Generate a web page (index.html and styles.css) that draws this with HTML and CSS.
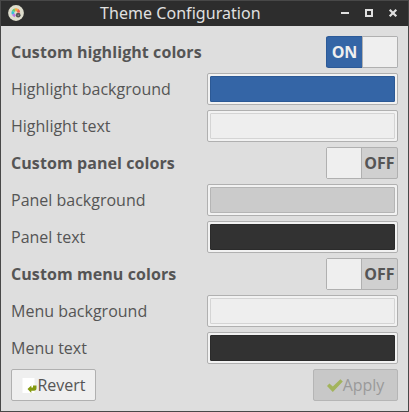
FILE: index.html
```html
<!DOCTYPE html>
<html lang="en">
<head>
<meta charset="utf-8">
<title>Theme Configuration</title>
<link rel="stylesheet" href="styles.css">
</head>
<body>
<div class="window">
  <header class="titlebar">
    <svg class="app-icon" width="16" height="16" viewBox="0 0 16 16">
      <circle cx="8" cy="8" r="7.9" fill="#deddcd"/>
      <g fill="none" stroke-width="2.8">
        <path d="M5.2 9.2A3.2 3.2 0 0 1 5.2 6.4" stroke="#35c0dc"/>
        <path d="M5.2 6.4A3.2 3.2 0 0 1 7 4.9" stroke="#5fce7a"/>
        <path d="M7 4.9A3.2 3.2 0 0 1 9.6 5.2" stroke="#f7aa40"/>
        <path d="M9.6 5.2A3.2 3.2 0 0 1 10.8 7.6" stroke="#f26052"/>
        <path d="M5.2 9.2A3.2 3.2 0 0 0 7.2 10.8" stroke="#b878e6"/>
      </g>
      <circle cx="10.2" cy="10.2" r="2.4" fill="#555"/>
      <circle cx="10.2" cy="10.2" r=".7" fill="#999"/>
    </svg>
    <h1 class="title">Theme Configuration</h1>
    <svg class="controls" width="60" height="10" viewBox="0 0 60 10">
      <path d="M1 5H9" stroke="#e0e0e0" stroke-width="2"/>
      <path d="M26 2H32V8H26Z" fill="none" stroke="#e0e0e0" stroke-width="2"/>
      <path d="M49.7 1.7L56.3 8.3M56.3 1.7L49.7 8.3" stroke="#e0e0e0" stroke-width="2.2"/>
    </svg>
  </header>
  <main class="content">
    <div class="row heading"><span class="label">Custom highlight colors</span><div class="switch on"><span class="state">ON</span><span class="knob"></span></div></div>
    <div class="row"><span>Highlight background</span><div class="color-button"><div class="swatch blue"></div></div></div>
    <div class="row"><span>Highlight text</span><div class="color-button"><div class="swatch light"></div></div></div>
    <div class="row heading"><span class="label">Custom panel colors</span><div class="switch"><span class="knob"></span><span class="state">OFF</span></div></div>
    <div class="row"><span>Panel background</span><div class="color-button"><div class="swatch gray"></div></div></div>
    <div class="row"><span>Panel text</span><div class="color-button"><div class="swatch dark"></div></div></div>
    <div class="row heading"><span class="label">Custom menu colors</span><div class="switch"><span class="knob"></span><span class="state">OFF</span></div></div>
    <div class="row"><span>Menu background</span><div class="color-button"><div class="swatch light"></div></div></div>
    <div class="row"><span>Menu text</span><div class="color-button"><div class="swatch dark"></div></div></div>
    <div class="row">
      <button class="button"><svg width="16" height="16" viewBox="0 0 16 16"><path d="M1.5 1H13.5V16H1.5Z" fill="#fff"/><path d="M6.5 12L10.3 8.5V10.5H12V8.5H15.5V11Q15.5 13.8 13 13.8H10.3V16Z" fill="#859a10"/></svg><span>Revert</span></button>
      <button class="button disabled" disabled><svg width="16" height="16" viewBox="0 0 16 16"><path d="M0 9L2.4 6.6L5.8 9.4L13.4 2.2L15.8 4.6L5.8 15Z" fill="#a3b45c"/></svg><span>Apply</span></button>
    </div>
  </main>
</div>
</body>
</html>
```
FILE: styles.css
```css
* { box-sizing: border-box; }
body { margin: 0; }
.window {
  width: 409px;
  height: 412px;
  border: 1px solid #484848;
  background: #dedede;
  color: #555;
  font: 16px "Open Sans", sans-serif;
  overflow: hidden;
}
.titlebar {
  display: flex;
  align-items: center;
  height: 25px;
  padding: 0 8px 1px 7px;
  background: #2d2d2d;
  color: #e0e0e0;
}
.app-icon { flex: none; }
.title {
  flex: 1;
  margin: 0;
  padding-left: 76px;
  font: 16px/24px "Noto Sans", sans-serif;
  letter-spacing: 0.05px;
  white-space: nowrap;
}
.controls { flex: none; }
.content {
  display: flex;
  flex-direction: column;
  gap: 5px;
  padding: 10px;
}
.row {
  display: flex;
  align-items: center;
  justify-content: space-between;
  height: 32px;
  white-space: nowrap;
}
.heading { font-weight: 700; }
.label { letter-spacing: 0.08px; }
.switch {
  display: flex;
  width: 72px;
  height: 32px;
  border: 1px solid #b0b0b0;
  border-radius: 2px;
  background: #d0d0d0;
}
.state { flex: 1; text-align: center; line-height: 30px; }
.knob { width: 35px; background: #efefef; border-right: 1px solid #b0b0b0; }
.on { background: #3465a6; color: #efefef; border-color: #b0b0b0 #b0b0b0 #b0b0b0 #2c5a98; }
.on .state { margin: -1px 0; line-height: 32px; background: #3465a6; border-radius: 2px 0 0 2px; box-shadow: inset 0 1px #2c5a98, inset 0 -1px #2c5a98; }
.on .knob { border-right: 0; border-left: 1px solid #b0b0b0; }
.color-button {
  width: 191px;
  height: 32px;
  padding: 2px;
  border: 1px solid #b0b0b0;
  border-radius: 2px;
  background: #f2f2f2;
}
.swatch { height: 26px; border: 1px solid; border-radius: 1px; }
.blue { background: #3465a6; border-color: #2c5995; }
.light { background: #eee; border-color: #d4d4d4; }
.gray { background: #cbcbcb; border-color: #b5b5b5; }
.dark { background: #323232; border-color: #2b2b2b; }
.button {
  display: flex;
  align-items: center;
  justify-content: center;
  width: 85px;
  height: 32px;
  padding: 0;
  border: 1px solid #b0b0b0;
  border-radius: 2px;
  background: #efefef;
  color: #555;
  font: 16px "Open Sans", sans-serif;
}
.disabled { background: #c8c8c8; border-color: #b5b5b5; color: #9a9a9a; }
```
